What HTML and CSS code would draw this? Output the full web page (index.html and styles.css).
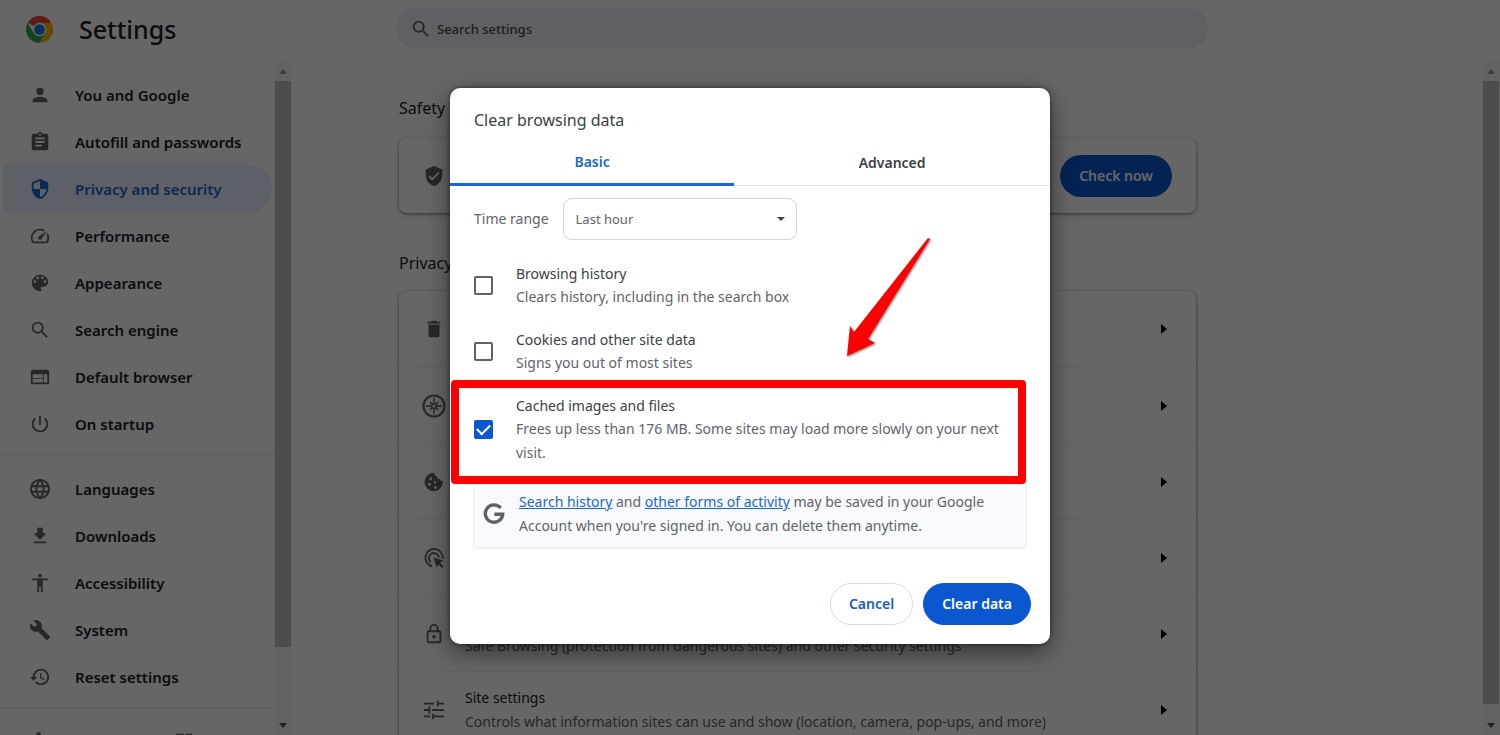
FILE: index.html
```html
<!DOCTYPE html>
<html lang="en">
<head>
<meta charset="utf-8">
<title>Settings</title>
<link rel="stylesheet" href="styles.css">
</head>
<body>
<svg class="sprite" aria-hidden="true">
  <symbol id="search" viewBox="0 0 24 24"><path d="M15.5 14h-.79l-.28-.27A6.47 6.47 0 0 0 16 9.5 6.5 6.5 0 1 0 9.5 16c1.61 0 3.09-.59 4.23-1.57l.27.28v.79l5 4.99L20.49 19l-4.99-5zm-6 0a4.5 4.5 0 1 1 0-9 4.5 4.5 0 0 1 0 9z"/></symbol>
  <symbol id="person" viewBox="0 0 24 24"><path d="M12 12a4 4 0 1 0 0-8 4 4 0 0 0 0 8zm0 2c-2.67 0-8 1.34-8 4v2h16v-2c0-2.66-5.33-4-8-4z"/></symbol>
  <symbol id="clip" viewBox="0 0 24 24"><path d="M19 3h-4.18C14.4 1.84 13.3 1 12 1s-2.4.84-2.82 2H5a2 2 0 0 0-2 2v14c0 1.100.9 2 2 2h14a2 2 0 0 0 2-2V5a2 2 0 0 0-2-2zm-7 0a1 1 0 1 1 0 2 1 1 0 0 1 0-2zm2 14H7v-2h7v2zm3-4H7v-2h10v2zm0-4H7V7h10v2z"/></symbol>
  <symbol id="shield" viewBox="0 0 24 24"><path d="M12 1 3 5v6c0 5.550 3.840 10.740 9 12 5.160-1.260 9-6.450 9-12V5l-9-4zm0 10.990h7c-.53 4.120-3.280 7.790-7 8.940V12H5V6.300l7-3.110v8.800z"/></symbol>
  <symbol id="speed" viewBox="0 0 24 24"><path d="m20.380 8.570-1.230 1.850a8 8 0 0 1-.22 7.580H5.070A8 8 0 0 1 15.580 6.850l1.850-1.230A10 10 0 0 0 3.350 19a2 2 0 0 0 1.720 1h13.850a2 2 0 0 0 1.740-1 10 10 0 0 0-.27-10.440zm-9.790 6.840a2 2 0 0 0 2.830 0l5.660-8.490-8.490 5.660a2 2 0 0 0 0 2.830z"/></symbol>
  <symbol id="palette" viewBox="0 0 24 24"><path d="M12 3a9 9 0 0 0 0 18c.83 0 1.500-.67 1.500-1.500 0-.39-.15-.74-.39-1.010-.23-.26-.38-.61-.38-.99 0-.83.67-1.500 1.500-1.500H16a5 5 0 0 0 5-5c0-4.420-4.030-8-9-8zm-5.500 9a1.500 1.500 0 1 1 0-3 1.500 1.500 0 0 1 0 3zm3-4a1.500 1.500 0 1 1 0-3 1.500 1.500 0 0 1 0 3zm5 0a1.500 1.500 0 1 1 0-3 1.500 1.500 0 0 1 0 3zm3 4a1.500 1.500 0 1 1 0-3 1.500 1.500 0 0 1 0 3z"/></symbol>
  <symbol id="web" viewBox="0 0 24 24"><path d="M20 4H4a2 2 0 0 0-2 2v12c0 1.100.9 2 2 2h16a2 2 0 0 0 2-2V6a2 2 0 0 0-2-2zm-5 14H4v-4h11v4zm0-5H4V9h11v4zm5 5h-4V9h4v9z"/></symbol>
  <symbol id="power" viewBox="0 0 24 24"><path d="M13 3h-2v10h2V3zm4.830 2.170-1.420 1.420A6.920 6.920 0 0 1 19 12a7 7 0 1 1-11.420-5.420L6.170 5.170A9 9 0 1 0 21 12c0-2.740-1.230-5.180-3.170-6.830z"/></symbol>
  <symbol id="globe" viewBox="0 0 24 24"><path fill="none" stroke="currentColor" stroke-width="2" d="M12 2a10 10 0 1 0 0 20 10 10 0 0 0 0-20zM12 2c-5.300 6-5.300 14 0 20 5.300-6 5.300-14 0-20zM3 9h18M3 15h18"/></symbol>
  <symbol id="download" viewBox="0 0 24 24"><path d="M19 9h-4V3H9v6H5l7 7 7-7zM5 18v2h14v-2H5z"/></symbol>
  <symbol id="access" viewBox="0 0 24 24"><path d="M12 2a2 2 0 1 1 0 4 2 2 0 0 1 0-4zm9 7h-6v13h-2v-6h-2v6H9V9H3V7h18v2z"/></symbol>
  <symbol id="wrench" viewBox="0 0 24 24"><path d="m22.700 19-9.100-9.100c.9-2.300.4-5-1.500-6.900-2-2-5-2.400-7.400-1.300L9 6 6 9 1.600 4.700C.4 7.100.9 10.100 2.900 12.100c1.900 1.900 4.600 2.400 6.900 1.500l9.100 9.100c.4.4 1 .4 1.400 0l2.300-2.300c.5-.4.5-1.100.1-1.400z"/></symbol>
  <symbol id="history" viewBox="0 0 24 24"><path d="M13 3a9 9 0 0 0-9 9H1l3.890 3.890.07.14L9 12H6a7 7 0 1 1 2.060 4.940l-1.420 1.420A9 9 0 1 0 13 3zm-1 5v5l4.280 2.540.72-1.210-3.500-2.080V8H12z"/></symbol>
  <symbol id="puzzle" viewBox="0 0 24 24"><path d="M20.500 11H19V7a2 2 0 0 0-2-2h-4V3.500a2.500 2.500 0 0 0-5 0V5H4a2 2 0 0 0-2 2v3.800h1.500a2.700 2.700 0 0 1 0 5.400H2V20c0 1.100.9 2 2 2h3.800v-1.500a2.700 2.700 0 0 1 5.400 0V22H17a2 2 0 0 0 2-2v-4h1.500a2.500 2.500 0 0 0 0-5z"/></symbol>
  <symbol id="launch" viewBox="0 0 24 24"><path d="M19 19H5V5h7V3H3v18h18v-9h-2v7zM14 3v2h3.600l-9.800 9.800 1.400 1.400L19 6.400V10h2V3h-7z"/></symbol>
  <symbol id="verified" viewBox="0 0 24 24"><path d="M12 1 3 5v6c0 5.550 3.840 10.740 9 12 5.160-1.260 9-6.450 9-12V5l-9-4zm-2 16-4-4 1.410-1.410L10 14.170l6.590-6.590L18 9l-8 8z"/></symbol>
  <symbol id="trash" viewBox="0 0 24 24"><path d="M6 19c0 1.100.9 2 2 2h8a2 2 0 0 0 2-2V7H6v12zM19 4h-3.500l-1-1h-5l-1 1H5v2h14V4z"/></symbol>
  <symbol id="compass" viewBox="0 0 24 24"><circle cx="12" cy="12" r="9" fill="none" stroke="currentColor" stroke-width="1.700"/><path fill="none" stroke="currentColor" stroke-width="1.200" d="M12 5v5M12 14v5M5 12h5M14 12h5M8.500 8.500l2 2M13.500 13.500l2 2M15.500 8.500l-2 2M10.500 13.500l-2 2"/><circle cx="12" cy="12" r="2" fill="none" stroke="currentColor" stroke-width="1.300"/></symbol>
  <symbol id="cookie" viewBox="0 0 24 24"><path fill-rule="evenodd" d="M21.600 11c-1.700.3-3-.8-3-2.400-2.300.4-4-1.300-3.600-3.400-2 .1-3.100-1.400-2.600-3.200A10 10 0 1 0 21.600 11zM8.500 7a1.600 1.600 0 1 1 0 3.200 1.600 1.600 0 0 1 0-3.200zM7 13a1.600 1.600 0 1 1 0 3.200A1.600 1.600 0 0 1 7 13zm6-2a1.400 1.400 0 1 1 0 2.800 1.400 1.400 0 0 1 0-2.800zm.5 5.500a1.600 1.600 0 1 1 0 3.200 1.600 1.600 0 0 1 0-3.200z"/></symbol>
  <symbol id="ads" viewBox="0 0 24 24"><path fill="none" stroke="currentColor" stroke-width="2" d="M10 21a9.500 9.500 0 1 1 11.500-8M8.500 16.500a5.500 5.500 0 1 1 8.800-5"/><path d="m11.500 11.500 11 3.600-4 1.900 4 4-1.800 1.800-4-4-1.700 3.700z"/></symbol>
  <symbol id="lock" viewBox="0 0 24 24"><path d="M18 8h-1V6A5 5 0 0 0 7 6v2H6a2 2 0 0 0-2 2v10c0 1.100.9 2 2 2h12a2 2 0 0 0 2-2V10a2 2 0 0 0-2-2zM9 6a3 3 0 0 1 6 0v2H9V6zm9 14H6V10h12v10zm-6-3a2 2 0 1 0 0-4 2 2 0 0 0 0 4z"/></symbol>
  <symbol id="tune" viewBox="0 0 24 24"><path d="M1 18v2h7v-2H1zM1 4v2h11V4H1zm11 18v-2h11v-2H12v-2h-2v6h2zM6 8v3H1v2h5v3h2V8H6zm17 5v-2H10v2h13zm-8-5h2V6h6V4h-6V2h-2v6z"/></symbol>
</svg>

<div class="page">
  <header class="topbar">
    <div class="brand">
      <svg class="logo" viewBox="0 0 48 48" aria-hidden="true">
        <path fill="#ea4335" d="M24 24 3.200 12A24 24 0 0 1 44.800 12z"/>
        <path fill="#fbbc04" d="M24 24V12h20.800A24 24 0 0 1 24 48l10.400-18z"/>
        <path fill="#34a853" d="M3.200 12A24 24 0 0 0 24 48l10.400-18L24 24l-10.400 6z"/>
        <circle cx="24" cy="24" r="12" fill="#fff"/>
        <circle cx="24" cy="24" r="9.500" fill="#1a73e8"/>
      </svg>
      <h1>Settings</h1>
    </div>
    <label class="searchbox"><svg class="icon"><use href="#search"/></svg><input type="text" placeholder="Search settings" aria-label="Search settings"></label>
  </header>

  <div class="content">
    <nav class="sidebar">
      <div class="menu">
        <a href="#"><svg class="icon"><use href="#person"/></svg>You and Google</a>
        <a href="#"><svg class="icon"><use href="#clip"/></svg>Autofill and passwords</a>
        <a href="#" class="active"><svg class="icon"><use href="#shield"/></svg>Privacy and security</a>
        <a href="#"><svg class="icon"><use href="#speed"/></svg>Performance</a>
        <a href="#"><svg class="icon"><use href="#palette"/></svg>Appearance</a>
        <a href="#"><svg class="icon"><use href="#search"/></svg>Search engine</a>
        <a href="#"><svg class="icon"><use href="#web"/></svg>Default browser</a>
        <a href="#"><svg class="icon"><use href="#power"/></svg>On startup</a>
        <hr>
        <a href="#"><svg class="icon"><use href="#globe"/></svg>Languages</a>
        <a href="#"><svg class="icon"><use href="#download"/></svg>Downloads</a>
        <a href="#"><svg class="icon"><use href="#access"/></svg>Accessibility</a>
        <a href="#"><svg class="icon"><use href="#wrench"/></svg>System</a>
        <a href="#"><svg class="icon"><use href="#history"/></svg>Reset settings</a>
        <hr>
        <a href="#"><svg class="icon"><use href="#puzzle"/></svg>Extensions<svg class="icon launch"><use href="#launch"/></svg></a>
      </div>
      <div class="scrollbar" aria-hidden="true"><i class="up"></i><b class="thumb menu-thumb"></b><i class="down"></i></div>
    </nav>

    <main>
      <div class="sections">
        <h2>Safety</h2>
        <div class="card check"><svg class="icon"><use href="#verified"/></svg><button type="button">Check now</button></div>
        <h2>Privacy</h2>
        <div class="card list">
          <div class="row"><svg class="icon"><use href="#trash"/></svg><span class="go"></span></div>
          <div class="row"><svg class="icon big"><use href="#compass"/></svg><span class="go"></span></div>
          <div class="row"><svg class="icon"><use href="#cookie"/></svg><span class="go"></span></div>
          <div class="row"><svg class="icon"><use href="#ads"/></svg><span class="go"></span></div>
          <div class="row"><svg class="icon"><use href="#lock"/></svg><p>Security<small>Safe Browsing (protection from dangerous sites) and other security settings</small></p><span class="go"></span></div>
          <div class="row"><svg class="icon"><use href="#tune"/></svg><p>Site settings<small>Controls what information sites can use and show (location, camera, pop-ups, and more)</small></p><span class="go"></span></div>
        </div>
      </div>
    </main>
    <div class="scrollbar" aria-hidden="true"><i class="up"></i><b class="thumb"></b><i class="down"></i></div>
  </div>
</div>

<div class="backdrop">
  <section class="dialog" role="dialog" aria-labelledby="dialog-title">
    <h2 id="dialog-title">Clear browsing data</h2>
    <div class="tabs" role="tablist">
      <button type="button" role="tab" aria-selected="true">Basic</button>
      <button type="button" role="tab" aria-selected="false">Advanced</button>
    </div>
    <div class="range">
      <label for="range">Time range</label>
      <div class="select"><select id="range"><option>Last hour</option></select></div>
    </div>
    <div class="options">
      <label class="option"><input type="checkbox"><span>Browsing history<small>Clears history, including in the search box</small></span></label>
      <label class="option"><input type="checkbox"><span>Cookies and other site data<small>Signs you out of most sites</small></span></label>
      <label class="option marked"><input type="checkbox" checked><span>Cached images and files<small>Frees up less than 176 MB. Some sites may load more slowly on your next visit.</small></span></label>
    </div>
    <div class="info">
      <svg viewBox="0 0 24 24" aria-hidden="true"><path fill="none" stroke="currentColor" stroke-width="3.400" d="M18.700 6A8.700 8.700 0 1 0 20.700 12.300H12.300"/></svg>
      <p><a href="#">Search history</a> and <a href="#">other forms of activity</a> may be saved in your Google Account when you're signed in. You can delete them anytime.</p>
    </div>
    <div class="actions">
      <button type="button" class="cancel">Cancel</button>
      <button type="button" class="primary">Clear data</button>
    </div>
    <svg class="arrow" viewBox="0 0 90 126" aria-hidden="true"><path d="M84 2 86 3 24 103 31 107 3 120 6 90 10 96z"/></svg>
  </section>
</div>
</body>
</html>
```
FILE: styles.css
```css
* { box-sizing: border-box; }
body {
  margin: 0;
  height: 100vh;
  overflow: hidden;
  background: #fff;
  color: #202124;
  font: 14px/24px "Noto Sans", "Open Sans", sans-serif;
}
h1, h2, p { margin: 0; font-weight: 400; }
button, input, select { font: inherit; color: inherit; }
button { cursor: pointer; }
small { display: block; font-size: inherit; color: #5f6368; }
.sprite { position: absolute; width: 0; height: 0; }
.icon { flex: none; width: 22px; height: 22px; fill: currentColor; color: #5f6368; }

.page { display: flex; flex-direction: column; height: 100vh; }
.topbar { flex: none; display: flex; height: 62px; padding-top: 8px; }
.brand { display: flex; flex: none; gap: 26px; width: 396px; height: 42px; padding-left: 26px; align-items: center; }
.logo { width: 27px; height: 27px; }
h1 { font-size: 25px; font-weight: 500; }
.searchbox { display: flex; align-items: center; gap: 5px; width: 812px; height: 41px; padding: 0 14px; border-radius: 21px; background: #edf1fa; }
.searchbox input { flex: 1; border: 0; padding: 0; background: none; outline: 0; font-size: 13px; font-weight: 500; }
.searchbox input::placeholder { color: #474747; }

.content { flex: 1; display: flex; min-height: 0; }
.sidebar { flex: none; display: flex; width: 292px; }
.menu { flex: 1; overflow: hidden; padding-top: 9px; }
.menu a { display: flex; align-items: center; gap: 24px; height: 47px; padding-left: 26px; margin: 0 2px 0 3px; border-radius: 0 24px 24px 0; color: inherit; font-size: 15px; font-weight: 600; text-decoration: none; white-space: nowrap; }
.menu a.active { background: #e8f0fe; color: #1967d2; }
.menu a.active .icon { color: #1967d2; }
.menu .launch { margin-left: -5px; }
.menu hr { height: 1px; margin: 7px 0 10px; border: 0; background: #ebebeb; }
.scrollbar { flex: none; display: flex; flex-direction: column; width: 18px; background: #f8f8f8; }
.scrollbar i { flex: none; height: 19px; display: grid; place-items: center; }
.scrollbar i::before { content: ""; border: 4px solid transparent; border-top: 0; border-bottom: 5px solid #999; }
.scrollbar .down::before { border-top: 5px solid #555; border-bottom: 0; }
.thumb { height: 623px; margin: 0 1px auto; background: #c1c1c1; }
.menu-thumb { height: 566px; }

main { flex: 1; min-width: 0; overflow: hidden; padding: 34px 24px 0 107px; }
.sections { max-width: 797px; }
.sections h2 { font-size: 16px; line-height: 24px; }
.card { border-radius: 8px; background: #fff; box-shadow: 0 1px 3px rgba(0,0,0,.4), 0 2px 6px rgba(0,0,0,.15); }
.check { display: flex; justify-content: space-between; align-items: center; height: 75px; margin: 18px 0 38px; padding: 0 24px; }
.check button { height: 42px; padding: 0 19px; border: 0; border-radius: 21px; background: #0b57d0; color: #fff; font-weight: 600; }
.list { margin-top: 16px; }
.row { display: flex; align-items: center; height: 76px; padding: 0 29px 0 24px; gap: 20px; border-top: 1px solid #efefef; }
.row:first-child { border-top: 0; }
.row .big { width: 28px; height: 28px; margin: 0 -3px; }
.go { margin-left: auto; border: 5px solid transparent; border-left: 6px solid #000; border-right: 0; }

.backdrop { position: absolute; inset: 0; display: grid; place-items: center; padding-bottom: 3px; background: rgba(0,0,0,.6); }
.dialog { position: relative; width: 600px; border-radius: 10px; background: #fff; color: #3c4043; box-shadow: 0 8px 24px rgba(0,0,0,.5), 0 0 4px rgba(0,0,0,.5); }
.dialog h2 { padding: 20px 24px 8px; font-size: 16px; line-height: 24px; }
.tabs { display: grid; grid-template-columns: 9fr 10fr; height: 46px; }
.tabs button { padding: 0; border: 0; border-bottom: 1px solid #e3e3e3; background: none; font-weight: 600; }
.tabs [aria-selected="true"] { border-bottom: 3px solid #1967d2; color: #1967d2; }
.range { display: flex; align-items: center; gap: 14px; padding: 12px 24px 22px; color: #5f6368; }
.select { position: relative; width: 234px; }
.select select { width: 100%; height: 42px; padding: 0 12px; border: 1px solid #d0d3d8; border-radius: 9px; background: #fff; appearance: none; font-size: 13px; }
.select::after { content: ""; position: absolute; right: 12px; top: 19px; border: 4px solid transparent; border-top-color: #444; border-bottom: 0; }
.options { display: flex; flex-direction: column; gap: 19px; padding: 0 24px; }
.option { position: relative; display: flex; align-items: center; gap: 23px; line-height: 23px; }
.option small { line-height: 24px; }
.option input { flex: none; display: grid; place-items: center; width: 19px; height: 19px; margin: 0; appearance: none; border: 2px solid #5f6368; border-radius: 2px; }
.option input:checked { border-color: #0b57d0; background: #0b57d0; }
.option input:checked::before { content: ""; width: 11px; height: 6px; border: solid #fff; border-width: 0 0 2px 2px; transform: translateY(-2px) rotate(-45deg); }
.marked::after { content: ""; position: absolute; z-index: 1; inset: -14px 0 -19px -23px; border: 8px solid #f00; border-radius: 4px; }
.marked span { padding-right: 8px; }
.info { display: flex; align-items: center; gap: 13px; margin: 14px 23px 0; padding: 10px 8px; border: 1px solid #eceef1; border-radius: 4px; background: #f8f9fd; color: #5f6368; }
.info svg { flex: none; width: 24px; height: 24px; }
.info a { color: #1967d2; }
.actions { display: flex; justify-content: flex-end; gap: 10px; padding: 34px 19px 19px; }
.actions button { height: 42px; padding: 0 18px; border: 1px solid #d3dcf0; border-radius: 21px; background: #fff; color: #1a5dbc; font-weight: 600; }
.actions .primary { border-color: #0b57d0; background: #0b57d0; color: #fff; }
.arrow { position: absolute; left: 394px; top: 148px; width: 90px; height: 126px; fill: #f00; filter: drop-shadow(1px 1px 1px rgba(0,0,0,.5)); }
```
